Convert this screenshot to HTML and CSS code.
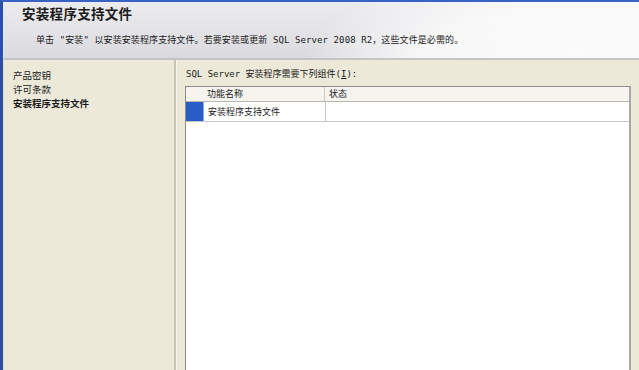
FILE: index.html
```html
<!DOCTYPE html>
<html lang="zh-CN">
<head>
<meta charset="utf-8">
<title>安装程序支持文件</title>
<link rel="stylesheet" href="styles.css">
</head>
<body>
<div class="window">
  <div class="header">
    <div class="title">安装程序支持文件</div>
    <div class="subtitle">单击 "安装" 以安装安装程序支持文件。若要安装或更新 SQL Server 2008 R2，这些文件是必需的。</div>
  </div>
  <div class="main">
    <div class="nav">
      <div class="nav-item">产品密钥</div>
      <div class="nav-item">许可条款</div>
      <div class="nav-item current">安装程序支持文件</div>
    </div>
    <div class="content">
      <div class="caption">SQL Server 安装程序需要下列组件(<u>I</u>):</div>
      <div class="grid">
        <div class="grid-head">
          <div class="c-icon"></div>
          <div class="c-name">功能名称</div>
          <div class="c-status">状态</div>
        </div>
        <div class="grid-row">
          <div class="c-icon sel"></div>
          <div class="c-name">安装程序支持文件</div>
          <div class="c-status"></div>
        </div>
        <div class="grid-empty"></div>
      </div>
    </div>
  </div>
</div>
</body>
</html>
```

FILE: styles.css
```css
html, body {
  margin: 0;
  padding: 0;
  height: 100%;
}
body {
  font-family: "Noto Sans CJK SC", "DejaVu Sans", sans-serif;
  color: #1a1a1a;
  background: #ece9d8;
}
.window {
  height: 370px;
  display: flex;
  flex-direction: column;
  border-left: 3px solid #2b50a8;
  border-top: 2px solid #3a62c4;
  box-sizing: border-box;
  overflow: hidden;
}
.header {
  height: 58px;
  flex: none;
  box-sizing: border-box;
  padding: 2px 0 0 18px;
  border-bottom: 2px solid #c4c4c8;
  border-left: 1px solid #dfe6f5;
  background:
    radial-gradient(ellipse 280px 120px at 570px 78px, rgba(255,255,255,0.95) 0%, rgba(255,255,255,0.75) 60%, rgba(255,255,255,0) 100%),
    linear-gradient(180deg, #ececef 0%, #e2e2e6 60%, #dadade 100%);
}
.title {
  font-size: 13.5px;
  font-weight: bold;
  line-height: 18px;
  letter-spacing: 0.3px;
}
.subtitle {
  margin: 12px 0 0 14px;
  font-family: "DejaVu Sans Mono", "Noto Sans CJK SC", monospace;
  font-size: 9px;
  line-height: 12px;
  letter-spacing: 0.1px;
  white-space: nowrap;
}
.main {
  flex: 1;
  display: flex;
  min-height: 0;
}
.nav {
  width: 173px;
  flex: none;
  padding: 8px 0 0 9px;
  box-sizing: border-box;
  border-right: 2px solid #c9c6b6;
  border-left: 1px solid #e8dfc8;
}
.nav-item {
  font-size: 9.5px;
  line-height: 14px;
}
.nav-item.current {
  font-weight: bold;
}
.content {
  flex: 1;
  display: flex;
  flex-direction: column;
  padding: 8px 8px 0 8px;
  border-left: 1px solid #f8f6ee;
}
.caption {
  font-size: 9px;
  line-height: 13px;
  margin-bottom: 5px;
  padding-left: 1px;
  font-family: "DejaVu Sans Mono", "Noto Sans CJK SC", monospace;
}
.caption u {
  text-decoration: underline;
}
.grid {
  flex: 1;
  display: flex;
  flex-direction: column;
  background: #ffffff;
  border-left: 1px solid #8c8c8c;
  border-top: 1px solid #8c8c8c;
  border-right: 2px solid #a8a8a8;
}
.grid-head, .grid-row {
  display: flex;
  font-size: 9px;
}
.grid-head {
  height: 14px;
  line-height: 14px;
  background: #f5f4ee;
  border-bottom: 1px solid #b8b8b0;
}
.grid-row {
  height: 19px;
  line-height: 19px;
  border-bottom: 1px solid #c8c8c8;
}
.c-icon {
  width: 17px;
  flex: none;
}
.c-icon.sel {
  background: #2a5cc8;
  border-right: 1px solid #8aa6de;
}
.c-name {
  width: 117px;
  flex: none;
  padding-left: 4px;
  border-right: 1px solid #c4c4c4;
}
.grid-head .c-name {
  border-right: 1px solid #c8c8c0;
}
.c-status {
  flex: 1;
  padding-left: 4px;
}
.grid-empty {
  flex: 1;
}
```
